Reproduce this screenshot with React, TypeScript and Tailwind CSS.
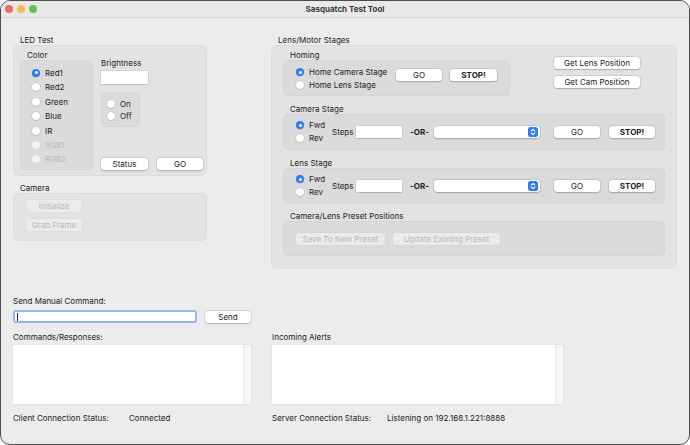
import React from 'react';

function Radio({ label, checked, disabled, h = 'h-[13px]' }: { label: string; checked?: boolean; disabled?: boolean; h?: string }) {
  return (
    <div className={`flex items-center whitespace-nowrap ${h}`}>
      {checked ? (
        <span className="w-[8px] h-[8px] shrink-0 rounded-full bg-[#2f7cf6] flex items-center justify-center shadow-[0_0.5px_1px_rgba(0,0,0,0.2)]">
          <span className="w-[3px] h-[3px] rounded-full bg-white" />
        </span>
      ) : disabled ? (
        <span className="w-[8px] h-[8px] shrink-0 rounded-full bg-[#f1f1f1] shadow-[0_0_0_0.5px_rgba(0,0,0,0.06)]" />
      ) : (
        <span className="w-[8px] h-[8px] shrink-0 rounded-full bg-white shadow-[0_0_0_0.5px_rgba(0,0,0,0.14),0_0.5px_1px_rgba(0,0,0,0.15)]" />
      )}
      <span className={`ml-[5px] leading-none ${disabled ? 'text-[#b9b9b9]' : ''}`}>{label}</span>
    </div>
  );
}

function Btn({ children, w, disabled, bold }: { children: React.ReactNode; w: string; disabled?: boolean; bold?: boolean }) {
  return (
    <div
      className={`${w} h-[12px] shrink-0 rounded-[3px] flex items-center justify-center leading-none whitespace-nowrap ${
        disabled
          ? 'bg-[#ebebeb] text-[#b7b7b7] shadow-[0_0_0_0.5px_rgba(0,0,0,0.04)]'
          : 'bg-white shadow-[0_0_0_0.5px_rgba(0,0,0,0.12),0_0.5px_1.5px_rgba(0,0,0,0.2)]'
      } ${bold ? 'font-bold' : ''}`}
    >
      {children}
    </div>
  );
}

function Field({ w }: { w: string }) {
  return <div className={`${w} h-[12px] shrink-0 bg-white shadow-[0_0_0_0.5px_rgba(0,0,0,0.12),0_0.5px_1px_rgba(0,0,0,0.12)]`} />;
}

function Label({ children, pl = 'pl-[7px]' }: { children: React.ReactNode; pl?: string }) {
  return <div className={`h-[9px] leading-[9px] whitespace-nowrap ${pl}`}>{children}</div>;
}

const box = 'rounded-[5px] bg-black/[0.035] shadow-[inset_0_0_0_1px_rgba(0,0,0,0.025)]';

function Select() {
  return (
    <div className="w-[106px] h-[12px] shrink-0 rounded-[3px] bg-white shadow-[0_0_0_0.5px_rgba(0,0,0,0.12),0_0.5px_1.5px_rgba(0,0,0,0.2)] flex items-center justify-end pr-[2px]">
      <span className="w-[10px] h-[10px] rounded-[2.5px] bg-[#2f7cf6] flex items-center justify-center">
        <svg width="6" height="8" viewBox="0 0 6 8" fill="none" stroke="white" strokeWidth="1.1" strokeLinecap="round" strokeLinejoin="round">
          <path d="M1.3 3 L3 1.3 L4.7 3" />
          <path d="M1.3 5 L3 6.7 L4.7 5" />
        </svg>
      </span>
    </div>
  );
}

function StageBox({ title }: { title: string }) {
  return (
    <div className="mt-[9px]">
      <Label>{title}</Label>
      <div className={`${box} h-[36px] flex items-center pl-[13px] whitespace-nowrap`}>
        <div className="w-[36px] shrink-0">
          <Radio label="Fwd" checked />
          <Radio label="Rev" />
        </div>
        <div className="w-[24px] shrink-0">Steps</div>
        <Field w="w-[46px]" />
        <div className="ml-[8px] w-[24px] shrink-0 font-bold">-OR-</div>
        <Select />
        <div className="ml-[14px]">
          <Btn w="w-[46px]">GO</Btn>
        </div>
        <div className="ml-[9px]">
          <Btn w="w-[46px]" bold>STOP!</Btn>
        </div>
      </div>
    </div>
  );
}

function TextArea({ w }: { w: string }) {
  return (
    <div className={`${w} h-[59px] mt-[3.5px] bg-white flex justify-end shadow-[0_0_0_0.5px_rgba(0,0,0,0.06)]`}>
      <div className="w-[8px] h-full bg-[#f7f7f7] border-l border-[#ededed]" />
    </div>
  );
}

export default function App() {
  return (
    <div className="w-[690px] h-[445px] bg-white font-[Inter,'Liberation_Sans',sans-serif] text-[8px] text-[#222]">
      <div className="w-full h-full rounded-[10px] border border-[#4d4d4d] bg-[#ececec] overflow-hidden flex flex-col">
        {/* title bar */}
        <div className="h-[17px] shrink-0 relative flex items-center justify-center bg-[#e9e9e9] border-b border-[#d6d6d6]">
          <div className="absolute left-[4px] top-[4px] flex gap-[4px]">
            <span className="w-[8px] h-[8px] rounded-full bg-[#ed6a5e]" />
            <span className="w-[8px] h-[8px] rounded-full bg-[#f5bf4f]" />
            <span className="w-[8px] h-[8px] rounded-full bg-[#61c554]" />
          </div>
          <span className="font-bold text-[#3a3a3a]">Sasquatch Test Tool</span>
        </div>

        <div className="pl-[12px] pt-[18px]">
          <div className="flex items-start">
            {/* left column */}
            <div className="w-[194px] shrink-0">
              <Label>LED Test</Label>
              <div className={`${box} h-[131px] flex pl-[7px] pt-[5.5px] pb-[6px]`}>
                <div className="w-[73px] shrink-0">
                  <Label>Color</Label>
                  <div className={`${box} h-[110px] pt-[6px] pl-[12px]`}>
                    <Radio h="h-[14.5px]" label="Red1" checked />
                    <Radio h="h-[14.5px]" label="Red2" />
                    <Radio h="h-[14.5px]" label="Green" />
                    <Radio h="h-[14.5px]" label="Blue" />
                    <Radio h="h-[14.5px]" label="IR" />
                    <Radio h="h-[14px]" label="RGB1" disabled />
                    <Radio h="h-[13px]" label="RGB2" disabled />
                  </div>
                </div>
                <div className="ml-[8px] flex flex-col">
                  <div className="mt-[8px]">
                    <Label pl="pl-0">Brightness</Label>
                  </div>
                  <div className="mt-[3.5px]">
                    <Field w="w-[47px] !h-[13px]" />
                  </div>
                  <div className={`${box} mt-[8px] w-[39px] h-[35px] pl-[6px] pt-[6px]`}>
                    <Radio h="h-[12px]" label="On" />
                    <Radio h="h-[12px]" label="Off" />
                  </div>
                  <div className="mt-auto flex gap-[9px]">
                    <Btn w="w-[47px]">Status</Btn>
                    <Btn w="w-[46px]">GO</Btn>
                  </div>
                </div>
              </div>

              <div className="mt-[7.5px]">
                <Label>Camera</Label>
              </div>
              <div className={`${box} h-[48px] pt-[7px] pl-[13px] flex flex-col gap-[7px]`}>
                <Btn w="w-[56px]" disabled>Initialize</Btn>
                <Btn w="w-[56px]" disabled>Grab Frame</Btn>
              </div>
            </div>

            {/* right column */}
            <div className="ml-[64px] w-[406px] shrink-0">
              <Label>Lens/Motor Stages</Label>
              <div className={`${box} h-[223.5px] px-[12px] pt-[5.5px]`}>
                <div className="flex items-start">
                  <div className="w-[227px] shrink-0">
                    <Label>Homing</Label>
                    <div className={`${box} h-[36px] flex items-start pl-[13px] pt-[6px]`}>
                      <div className="w-[100px] shrink-0">
                        <Radio label="Home Camera Stage" checked />
                        <Radio label="Home Lens Stage" />
                      </div>
                      <div className="mt-[3.5px] flex gap-[8px]">
                        <Btn w="w-[46px]">GO</Btn>
                        <Btn w="w-[47px]" bold>STOP!</Btn>
                      </div>
                    </div>
                  </div>
                  <div className="ml-[44px] pt-[6.5px] flex flex-col gap-[7px]">
                    <Btn w="w-[86px]">Get Lens Position</Btn>
                    <Btn w="w-[86px]">Get Cam Position</Btn>
                  </div>
                </div>

                <StageBox title="Camera Stage" />
                <StageBox title="Lens Stage" />

                <div className="mt-[8.5px]">
                  <Label>Camera/Lens Preset Positions</Label>
                  <div className={`${box} h-[35px] flex items-center pl-[13px] gap-[8px]`}>
                    <Btn w="w-[89px]" disabled>Save To New Preset</Btn>
                    <Btn w="w-[107px]" disabled>Update Existing Preset</Btn>
                  </div>
                </div>
              </div>
            </div>
          </div>

          {/* bottom */}
          <div className="mt-[28px]">
            <Label pl="pl-0">Send Manual Command:</Label>
            <div className="mt-[4.5px] flex items-center">
              <div className="w-[184px] h-[13px] rounded-[3px] border-2 border-[#93b7ef] bg-white flex items-center">
                <span className="ml-[1.5px] w-[1px] h-[8px] bg-[#222]" />
              </div>
              <div className="ml-[8px]">
                <Btn w="w-[46px]">Send</Btn>
              </div>
            </div>

            <div className="mt-[9.5px] flex">
              <div className="w-[238px] shrink-0">
                <Label pl="pl-0">Commands/Responses:</Label>
                <TextArea w="w-[238px]" />
              </div>
              <div className="ml-[21px] w-[291px] shrink-0">
                <Label pl="pl-0">Incoming Alerts</Label>
                <TextArea w="w-[291px]" />
              </div>
            </div>

            <div className="mt-[9.5px] flex h-[9px] leading-[9px] whitespace-nowrap">
              <div className="w-[259px] shrink-0 flex">
                <span className="w-[116px] shrink-0">Client Connection Status:</span>
                <span>Connected</span>
              </div>
              <div className="flex">
                <span className="w-[115px] shrink-0">Server Connection Status:</span>
                <span>Listening on 192.168.1.221:8888</span>
              </div>
            </div>
          </div>
        </div>
      </div>
    </div>
  );
}
